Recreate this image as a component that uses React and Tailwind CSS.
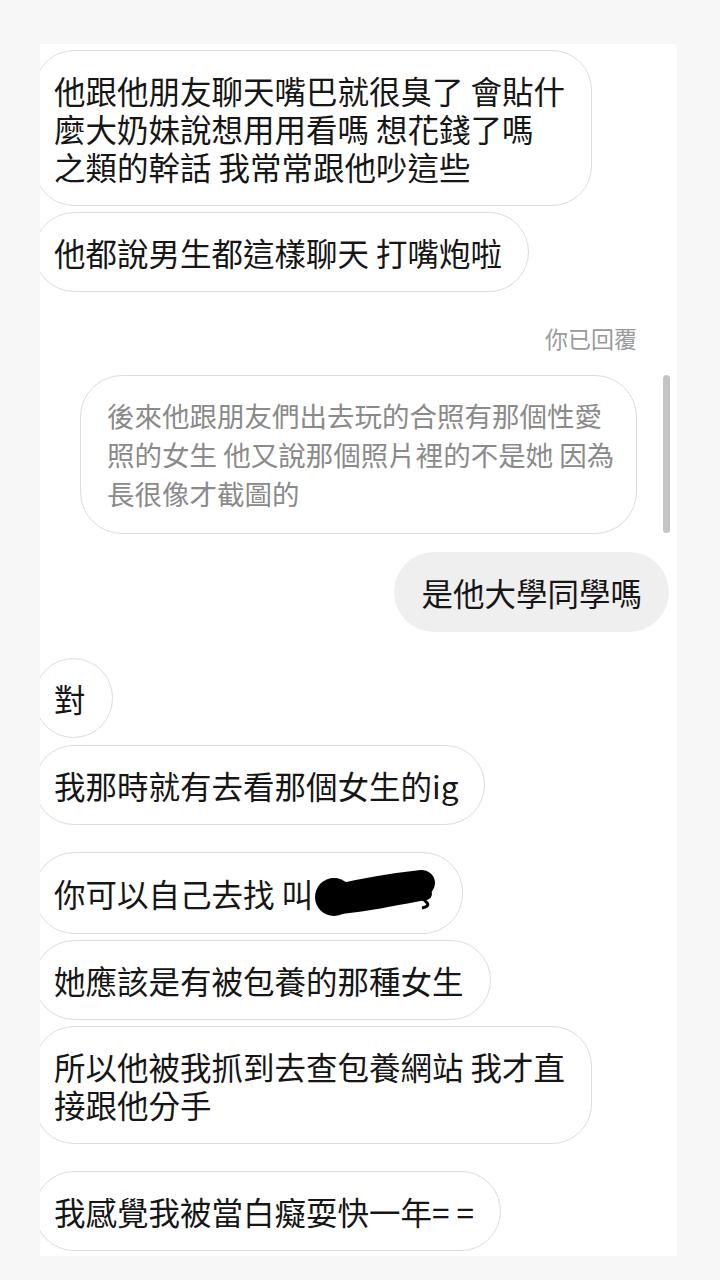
const FONT = { fontFamily: '"Noto Sans CJK TC", "Noto Sans CJK SC", sans-serif' };

function Left({ lines, mt, children }) {
  return (
    <div
      className={`-ml-[6px] rounded-[40px] border-[1.5px] border-[#dcdcdc] bg-white pl-[19px] pr-[26px] py-5 text-[31.5px] leading-[38px] text-[#161616] whitespace-nowrap ${mt}`}
    >
      {lines
        ? lines.map((l, i) => <div key={i}>{l}</div>)
        : children}
    </div>
  );
}

// hand-drawn black marker blotting out the account name
function Scribble() {
  return (
    <svg width="126" height="50" viewBox="0 0 126 50" className="-ml-[3px] inline-block">
      <circle cx="24" cy="29" r="19" fill="#000" />
      <path d="M24 30 C 50 24, 84 18, 112 15" stroke="#000" strokeWidth="26" strokeLinecap="round" fill="none" />
      <path d="M30 40 C 60 38, 90 30, 116 26" stroke="#000" strokeWidth="12" strokeLinecap="round" fill="none" />
      <path d="M108 28 C 118 34, 122 38, 112 40" stroke="#000" strokeWidth="3" fill="none" />
    </svg>
  );
}

export default function App() {
  return (
    <div className="min-h-[1280px] bg-[#f7f7f7] pt-[44px] pl-[40px]" style={FONT}>
      <div className="relative h-[1212px] w-[637px] overflow-hidden rounded-tr-[4px] bg-white flex flex-col items-start">
        <Left mt="mt-[6px]" lines={["他跟他朋友聊天嘴巴就很臭了 會貼什", "麼大奶妹說想用用看嗎 想花錢了嗎", "之類的幹話 我常常跟他吵這些"]} />
        <Left mt="mt-[6px]" lines={["他都說男生都這樣聊天 打嘴炮啦"]} />

        <div className="mt-[31px] self-end mr-[40px] text-[23px] leading-[30px] text-[#9a9a9a]">你已回覆</div>

        <div className="mt-[22px] self-end mr-[40px] w-[557px] rounded-[42px] border-[1.5px] border-[#dcdcdc] bg-white pl-[26px] py-5 text-[27.5px] leading-[39px] text-[#8a8a8a] whitespace-nowrap">
          <div>後來他跟朋友們出去玩的合照有那個性愛</div>
          <div>照的女生 他又說那個照片裡的不是她 因為</div>
          <div>長很像才截圖的</div>
        </div>
        <div className="absolute left-[623px] top-[331px] h-[158px] w-[7px] rounded-full bg-[#c4c4c4]" />

        <div className="mt-[18px] self-end mr-[8px] rounded-full bg-[#efefef] px-[27px] py-[21px] text-[31.5px] leading-[38px] text-[#161616] whitespace-nowrap">
          是他大學同學嗎
        </div>

        <Left mt="mt-[26px]" lines={["對"]} />
        <Left mt="mt-[7px]" lines={["我那時就有去看那個女生的ig"]} />
        <Left mt="mt-[27px]">
          <div className="flex items-center h-[40px]">
            <span>你可以自己去找 叫</span>
            <Scribble />
          </div>
        </Left>
        <Left mt="mt-[6px]" lines={["她應該是有被包養的那種女生"]} />
        <Left mt="mt-[6px]" lines={["所以他被我抓到去查包養網站 我才直", "接跟他分手"]} />
        <Left mt="mt-[27px]" lines={["我感覺我被當白癡耍快一年= ="]} />
      </div>
    </div>
  );
}
